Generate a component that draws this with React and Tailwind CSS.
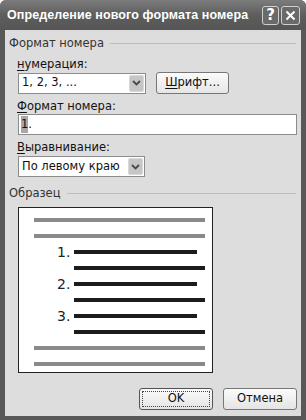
import React from 'react';

const font = { fontFamily: '"DejaVu Sans", Tahoma, sans-serif' };

// accelerator letter, underlined like in the Win dialogs
const U = ({ children }) => <span className="underline underline-offset-2">{children}</span>;

const Chevron = () => (
  <svg width="9" height="6" viewBox="0 0 9 6">
    <path d="M1 1 L4.5 4.5 L8 1" fill="none" stroke="#4a4a4a" strokeWidth="1.8" />
  </svg>
);

const Combo = ({ value, width }) => (
  <div className={`flex h-[21px] items-center border border-[#8c8c8c] bg-white ${width}`}>
    <span className="flex-1 pl-[3px] text-[11.5px] text-[#111]">{value}</span>
    <div className="mr-px flex h-[17px] w-[15px] items-center justify-center rounded-[2px] border border-[#d8d8d8] bg-[#c6c6c6]">
      <Chevron />
    </div>
  </div>
);

const GroupLabel = ({ children, className }) => (
  <div className={`flex items-center pl-[4px] pr-[5px] ${className}`}>
    <span className="text-[11.5px] leading-[14px] text-[#333]">{children}</span>
    <div className="ml-[6px] h-px flex-1 bg-[#bdbdbd]" />
  </div>
);

const Row = ({ children }) => <div className="flex h-[16px] items-center">{children}</div>;

const GrayLine = () => (
  <Row>
    <div className="ml-[15px] h-[4px] w-[171px] bg-[#8a8a8a]" />
  </Row>
);

const NumLine = ({ n }) => (
  <Row>
    <span className="ml-[38px] w-[17px] text-[14px] leading-none text-[#222]">{n}.</span>
    <div className="h-[4px] w-[123px] bg-[#1c1c1c]" />
  </Row>
);

const TailLine = () => (
  <Row>
    <div className="ml-[55px] h-[4px] w-[131px] bg-[#1c1c1c]" />
  </Row>
);

export default function App() {
  return (
    <div className="flex h-[420px] w-[306px] flex-col rounded-t-[6px] bg-[#585858]" style={font}>
      {/* title bar */}
      <div className="flex h-[30px] items-center rounded-t-[6px] bg-gradient-to-b from-[#7c7c7c] via-[#5e5e5e] to-[#555555] pl-[7px] pr-[6px]">
        <span
          className="flex-1 whitespace-nowrap text-[12.5px] font-bold tracking-[0.1px] text-white"
          style={{ fontFamily: '"Liberation Sans", Arial, sans-serif' }}
        >
          Определение нового формата номера
        </span>
        <div className="flex gap-[2px]">
          <div className="flex h-[19px] w-[17px] items-center justify-center rounded-[3px] border border-[#d0d0d0] bg-[#6a6a6a] text-[15px] font-bold leading-none text-white">
            ?
          </div>
          <div className="flex h-[19px] w-[19px] items-center justify-center rounded-[3px] border border-[#d0d0d0] bg-[#6a6a6a]">
            <svg width="11" height="11" viewBox="0 0 11 11">
              <path d="M1.5 1.5 L9.5 9.5 M9.5 1.5 L1.5 9.5" stroke="white" strokeWidth="2" />
            </svg>
          </div>
        </div>
      </div>

      {/* client area */}
      <div className="mx-[5px] mb-[4px] flex flex-1 flex-col bg-[#dddddd]">
        <GroupLabel className="mt-[6px]">Формат номера</GroupLabel>

        <div className="ml-[12px] mt-[7px] text-[11.5px] leading-[14px] text-[#111]">
          <U>н</U>умерация:
        </div>
        <div className="ml-[13px] mt-px flex h-[22px] items-center">
          <Combo value="1, 2, 3, ..." width="w-[128px]" />
          <div className="ml-[10px] flex h-[22px] w-[73px] items-center justify-center rounded-[3px] border border-[#777] bg-gradient-to-b from-[#fbfbfb] to-[#e6e6e6] text-[11.5px] text-[#111]">
            <U>Ш</U>рифт...
          </div>
        </div>

        <div className="ml-[12px] mt-[5px] text-[11.5px] leading-[14px] text-[#111]">
          <U>Ф</U>ормат номера:
        </div>
        <div className="ml-[13px] mt-px flex h-[21px] w-[279px] items-center border border-[#8c8c8c] bg-white pl-[2px] text-[11.5px] text-[#111]">
          <span className="bg-[#a8a8a8]">1</span>.
        </div>

        <div className="ml-[12px] mt-[5px] text-[11.5px] leading-[14px] text-[#111]">
          <U>В</U>ыравнивание:
        </div>
        <div className="ml-[13px] mt-[2px]">
          <Combo value="По левому краю" width="w-[127px]" />
        </div>

        <GroupLabel className="mt-[9px]">Образец</GroupLabel>

        <div className="ml-[13px] mt-[7px] flex h-[166px] w-[195px] flex-col border border-[#222] bg-white pt-[4px]">
          <GrayLine />
          <GrayLine />
          <NumLine n={1} />
          <TailLine />
          <NumLine n={2} />
          <TailLine />
          <NumLine n={3} />
          <TailLine />
          <GrayLine />
          <GrayLine />
        </div>

        <div className="mr-[4px] mt-[15px] flex justify-end gap-[10px]">
          <div className="flex h-[22px] w-[74px] items-center justify-center rounded-[3px] border border-[#555] bg-gradient-to-b from-[#fbfbfb] to-[#e4e4e4] p-[2px]">
            <div className="flex h-full w-full items-center justify-center border border-dotted border-[#444] text-[11.5px] text-[#111]">
              OK
            </div>
          </div>
          <div className="flex h-[22px] w-[74px] items-center justify-center rounded-[3px] border border-[#777] bg-gradient-to-b from-[#fbfbfb] to-[#e4e4e4] text-[11.5px] text-[#111]">
            Отмена
          </div>
        </div>
      </div>
    </div>
  );
}
